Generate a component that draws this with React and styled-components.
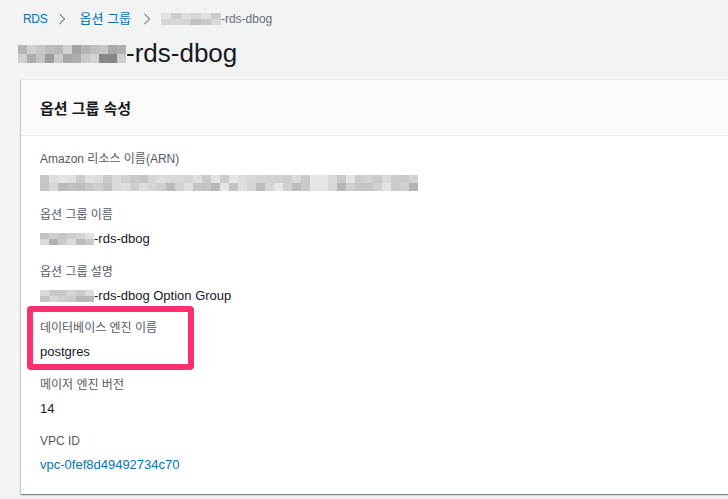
import React from "react";
import styled, { createGlobalStyle } from "styled-components";

const Global = createGlobalStyle`
  html, body { margin: 0; padding: 0; background: #f2f3f3; overflow: hidden; }
  body { font-family: "Liberation Sans", "Noto Sans CJK KR", sans-serif; color: #16191f; }
`;

const Page = styled.div`
  width: 728px;
  height: 499px;
  overflow: hidden;
  display: flex;
  flex-direction: column;
`;

const Crumbs = styled.nav`
  display: flex;
  align-items: center;
  padding: 11px 0 0 23px;
  height: 16px;
  font-size: 12px;
  line-height: 16px;
`;

const CrumbLink = styled.a`
  color: #0073bb;
  text-decoration: none;
  font-size: ${(p) => p.$size || 12}px;
  letter-spacing: ${(p) => (p.$tight ? "-0.3px" : "0")};
`;

const CrumbCurrent = styled.span`
  color: #687078;
  display: flex;
  align-items: center;
`;

const Sep = styled.span`
  display: flex;
  align-items: center;
  margin: 0 ${(p) => p.$right || 13}px 0 ${(p) => p.$left || 12}px;
`;

const Title = styled.h1`
  margin: 0;
  padding: 9px 0 0 18px;
  height: 34px;
  display: flex;
  align-items: center;
  font-size: 26px;
  font-weight: 400;
  line-height: 34px;
  color: #16191f;
`;

const Mosaic = styled.span`
  display: inline-grid;
  grid-template-columns: repeat(${(p) => p.$cols}, ${(p) => p.$cell}px);
  grid-auto-rows: ${(p) => p.$rowH}px;
  vertical-align: middle;
  margin-top: ${(p) => p.$top || 0}px;
`;

const Cell = styled.span`
  display: block;
`;

function Blur({ cols, cell = 9, rowH = 8, seed = 1, light = 200, dark = 140, top }) {
  const cells = [];
  let s = seed * 9301 + 49297;
  for (let i = 0; i < cols * 2; i++) {
    s = (s * 9301 + 49297) % 233280;
    const r = s / 233280;
    const v = Math.round(light - (light - dark) * r * (i >= cols ? 1 : 0.7));
    cells.push(<Cell key={i} style={{ background: `rgb(${v},${v},${v + 2})` }} />);
  }
  return (
    <Mosaic $cols={cols} $cell={cell} $rowH={rowH} $top={top}>
      {cells}
    </Mosaic>
  );
}

const Panel = styled.section`
  margin: 9px 0 0 21px;
  width: 760px;
  height: 414px;
  background: #fff;
  border-top: 1px solid #eaeded;
  box-shadow: 0 1px 1px 0 rgba(0, 28, 36, 0.3), 1px 1px 1px 0 rgba(0, 28, 36, 0.15),
    -1px 1px 1px 0 rgba(0, 28, 36, 0.15);
  display: flex;
  flex-direction: column;
`;

const PanelHeader = styled.header`
  height: 55px;
  background: #fafafa;
  border-bottom: 1px solid #eaeded;
  display: flex;
  align-items: center;
  padding-left: 19px;
  font-size: 15px;
  font-weight: 700;
  color: #16191f;
`;

const PanelBody = styled.div`
  padding: 15px 19px 20px;
  display: flex;
  flex-direction: column;
  gap: 16.4px;
`;

const Item = styled.div`
  position: relative;
  display: flex;
  flex-direction: column;
  gap: 8px;
  ${(p) =>
    p.$highlight &&
    `
    &::before {
      content: "";
      position: absolute;
      left: -13px;
      top: -14px;
      width: 155px;
      height: 52px;
      border: 6px solid #fc2f6d;
      border-radius: 4px;
    }
  `}
`;

const Label = styled.div`
  font-size: 12px;
  line-height: 16px;
  height: 16px;
  color: #545b64;
`;

const Value = styled.div`
  font-size: 13px;
  line-height: 16px;
  height: 16px;
  color: #16191f;
  display: flex;
  align-items: center;
`;

const ValueLink = styled.a`
  font-size: 13px;
  line-height: 16px;
  color: #0073bb;
  text-decoration: none;
`;

const Chevron = () => (
  <svg width="8" height="12" viewBox="0 0 8 12" fill="none">
    <path d="M1.5 1l5 5-5 5" stroke="#879596" strokeWidth="1.3" />
  </svg>
);

export default function App() {
  return (
    <Page>
      <Global />
      <Crumbs>
        <CrumbLink href="#" $tight>RDS</CrumbLink>
        <Sep $left={11} $right={13}>
          <Chevron />
        </Sep>
        <CrumbLink href="#" $size={13}>옵션 그룹</CrumbLink>
        <Sep $left={12} $right={10}>
          <Chevron />
        </Sep>
        <CrumbCurrent>
          <Blur cols={6} cell={10} rowH={6} seed={3} light={232} dark={190} />
          -rds-dbog
        </CrumbCurrent>
      </Crumbs>
      <Title>
        <Blur cols={12} cell={9} rowH={9} seed={7} light={215} dark={130} top={2} />
        -rds-dbog
      </Title>
      <Panel>
        <PanelHeader>옵션 그룹 속성</PanelHeader>
        <PanelBody>
          <Item>
            <Label>Amazon 리소스 이름(ARN)</Label>
            <Value>
              <Blur cols={42} cell={9} rowH={8} seed={11} light={232} dark={180} />
            </Value>
          </Item>
          <Item>
            <Label>옵션 그룹 이름</Label>
            <Value>
              <Blur cols={6} cell={9} rowH={6} seed={5} light={225} dark={175} />
              -rds-dbog
            </Value>
          </Item>
          <Item>
            <Label>옵션 그룹 설명</Label>
            <Value>
              <Blur cols={6} cell={9} rowH={6} seed={9} light={225} dark={175} />
              -rds-dbog Option Group
            </Value>
          </Item>
          <Item $highlight>
            <Label>데이터베이스 엔진 이름</Label>
            <Value>postgres</Value>
          </Item>
          <Item>
            <Label>메이저 엔진 버전</Label>
            <Value>14</Value>
          </Item>
          <Item>
            <Label>VPC ID</Label>
            <Value>
              <ValueLink href="#">vpc-0fef8d49492734c70</ValueLink>
            </Value>
          </Item>
        </PanelBody>
      </Panel>
    </Page>
  );
}
